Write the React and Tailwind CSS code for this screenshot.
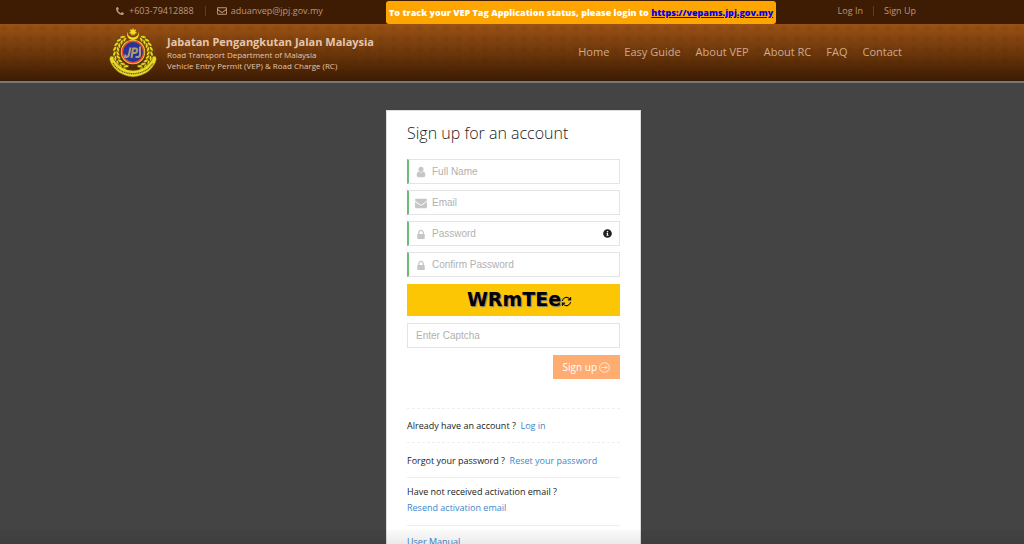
import React from "react";
import { FaInfoCircle, FaRegEnvelope } from "react-icons/fa";

const USER =
  "M1536 1399q0 109-62.5 187t-150.5 78h-854q-88 0-150.5-78t-62.5-187q0-85 8.5-160.5t31.5-152 58.5-131 94-89 134.5-34.5q131 128 313 128t313-128q76 0 134.5 34.5t94 89 58.5 131 31.5 152 8.5 160.5zm-256-887q0 159-112.5 271.5t-271.5 112.5-271.5-112.5-112.5-271.5 112.5-271.5 271.5-112.5 271.5 112.5 112.5 271.5z";
const MAIL =
  "M1792 710v794q0 66-47 113t-113 47h-1472q-66 0-113-47t-47-113v-794q44 49 101 87 362 246 497 345 57 42 92.5 65.5t94.5 48 110 24.5h2q51 0 110-24.5t94.5-48 92.5-65.5q170-123 498-345 57-39 100-87zm0-294q0 79-49 151t-122 123q-376 261-468 325-10 7-42.5 31t-54 38.5-52 32.5-57.5 27-50 9h-2q-23 0-50-9t-57.5-27-52-32.5-54-38.5-42.5-31q-91-64-262-182.5t-205-142.5q-62-42-117-115.5t-55-136.5q0-78 41.5-130t118.5-52h1472q65 0 112.5 47t47.5 113z";
const LOCK =
  "M320 768h512v-192q0-106-75-181t-181-75-181 75-75 181v192zm832 96v576q0 40-28 68t-68 28h-960q-40 0-68-28t-28-68v-576q0-40 28-68t68-28h32v-192q0-184 132-316t316-132 316 132 132 316v192h32q40 0 68 28t28 68z";
const PHONE =
  "M1408 1112q0 27-10 70.5t-21 68.5q-21 50-122 106-94 51-186 51-27 0-53-3.5t-57.5-12.5-47-14.5-55.5-20.5-49-18q-98-35-175-83-127-79-264-216t-216-264q-48-77-83-175-3-9-18-49t-20.5-55.5-14.5-47-12.5-57.5-3.5-53q0-92 51-186 56-101 106-122 25-11 68.5-21t70.5-10q14 0 21 3 18 6 53 76 11 19 30 54t35 63.5 31 53.5q3 4 17.5 25t21.5 35.5 7 28.5q0 20-28.5 50t-62 55-62 53-28.5 46q0 9 5 22.5t8.5 20.5 14 24 11.5 19q76 137 174 235t235 174q2 1 19 11.5t24 14 20.5 8.5 22.5 5q18 0 46-28.5t53-62 55-62 50-28.5q14 0 28.5 7t35.5 21.5 25 17.5q25 15 53.5 31t63.5 35 54 30q70 35 76 53 3 7 3 21z";

function Glyph({ d, viewBox, className }) {
  return (
    <svg viewBox={viewBox} className={className} fill="currentColor" aria-hidden="true">
      <path d={d} />
    </svg>
  );
}

function Crest() {
  const leaves = [];
  for (let i = 0; i < 9; i++) {
    const deg = 54 - i * 15;
    const a = (deg * Math.PI) / 180;
    for (const side of [1, -1]) {
      leaves.push(
        <g
          key={i + "_" + side}
          transform={`translate(${25 + side * 17 * Math.cos(a)} ${25.5 - 17 * Math.sin(a)}) scale(${side} 1) rotate(${-deg - 90})`}
        >
          <ellipse cx="0" cy="-1.8" rx="2.8" ry="1.4" transform="rotate(25)" />
          <ellipse cx="0" cy="1.8" rx="2.8" ry="1.4" transform="rotate(-25)" />
        </g>
      );
    }
  }
  return (
    <svg viewBox="0 0 50 52" className="h-[52px] w-[50px] shrink-0" role="img" aria-label="JPJ crest">
      <g fill="#e6d51f" stroke="#4f3a08" strokeWidth="0.5">{leaves}</g>
      <path d="M19.500 4.500a6 6 0 1 0 11 0 5.600 5 0 1 1-11 0z" fill="#f0e224" />
      <path d="M25 1.500l.9 1.700 2.100-.5-1 1.900 1.500 1.400-2.100.4-.2 1.800-1.200-1.400-1.200 1.400-.2-1.800-2.100-.4 1.500-1.400-1-1.900 2.100.5z" fill="#f0e224" stroke="#f0e224" strokeWidth="0.500" />
      <path d="M1.500 32l1-3 3 .5q.5 1.500.5 3Q12 43 25 43.500 38 43 44 32.500q0-1.500.5-3l3-.5 1 3-1 3.500Q41 48.500 25 50 9 48.500 2.500 35.500z" fill="#e9dc22" stroke="#6b5010" strokeWidth="0.500" />
      <path d="M5 36Q11 46 25 46.800 39 46 45 36" fill="none" stroke="#6d5a30" strokeWidth="1.300" strokeDasharray="1.200 .6" />
      <circle cx="25" cy="25" r="12.200" fill="#e9dc3a" />
      <circle cx="25" cy="25" r="10.700" fill="#28349a" stroke="#ee4a2a" strokeWidth="1.500" />
      <g fill="none" stroke="#a99c72" strokeWidth="2">
        <path d="M22.500 20.500l-1.500 7q-.5 2.500-2.500 2.500h-1.500l.5-2.500" />
        <path d="M23.500 31l1.500-9.500h2.500q2 0 1.700 2.200t-2.400 2.200h-2" />
        <path d="M32 19.500v8q0 2.500-2.500 2.500h-2" />
      </g>
    </svg>
  );
}

function Field({ id, label, type = "text", icon, viewBox, iconClass, info }) {
  return (
    <div className="flex h-[25px] items-center border border-l-2 border-[#e4e4e4] border-l-[#67bd78] bg-white">
      <label htmlFor={id} aria-label={label} className="flex w-[23px] shrink-0 justify-center pl-px text-[#c6c6c6]">
        <Glyph d={icon} viewBox={viewBox} className={iconClass} />
      </label>
      <input
        id={id}
        type={type}
        placeholder={label}
        className="h-[22px] min-w-0 flex-1 bg-transparent font-['Liberation_Sans',sans-serif] text-[10px] leading-5 text-[#333] outline-none placeholder:text-[#b1b1b1]"
      />
      {info && (
        <button type="button" aria-label="Password requirements" className="mr-[7px] text-[#222]">
          <FaInfoCircle className="size-[9px]" />
        </button>
      )}
    </div>
  );
}

const nav = ["Home", "Easy Guide", "About VEP", "About RC", "FAQ", "Contact"];

export default function App() {
  return (
    <div className="h-screen overflow-hidden bg-[#444] font-['Open_Sans',sans-serif] text-[9px] text-[#222]">
      <div className="bg-[#3e1c04] text-[#bd9675]">
        <div className="mx-auto flex h-6 max-w-[808px] items-center">
          <div className="flex w-[278px] shrink-0 items-center pb-[2px] pl-2">
            <Glyph d={PHONE} viewBox="0 0 1408 1408" className="mr-[5px] size-[8px]" />
            <span>+603-79412888</span>
            <span className="mx-[11px] h-[10px] w-px bg-[#6b3a14]" />
            <FaRegEnvelope className="mr-1 size-[10px]" />
            <a href="#mail">aduanvep@jpj.gov.my</a>
          </div>
          <p className="mt-px h-[23px] shrink-0 rounded-[3px] bg-[#ffa500] px-[3px] leading-[23px] font-extrabold whitespace-nowrap text-white">
            To track your VEP Tag Application status, please login to{" "}
            <a href="#vepams" className="text-[#0000ee] underline">https://vepams.jpj.gov.my</a>
          </p>
          <div className="ml-auto flex items-center pb-[3px]">
            <a href="#login">Log In</a>
            <span className="mx-[10px] h-[10px] w-px bg-[#6b3a14]" />
            <a href="#signup">Sign Up</a>
          </div>
        </div>
      </div>

      <header className="border-b-2 border-[#777] bg-[radial-gradient(circle_at_4px_4px,rgba(50,20,0,0.07)_2px,transparent_4px),linear-gradient(to_bottom,#9b5214,#6d370b_50%,#3c1b02)] bg-[length:13px_11px,100%_100%]">
        <div className="mx-auto flex h-[57px] max-w-[808px] items-center">
          <Crest />
          <div className="ml-[9px] leading-[11px] text-[#e3c6ae]">
            <p className="text-[11px] leading-[14px] font-bold">Jabatan Pengangkutan Jalan Malaysia</p>
            <p className="text-[8px]">Road Transport Department of Malaysia</p>
            <p className="text-[8px]">Vehicle Entry Permit (VEP) &amp; Road Charge (RC)</p>
          </div>
          <nav className="mr-[14px] ml-auto flex gap-[15px] text-[11px] text-[#d0aa8b]">
            {nav.map((item) => (
              <a key={item} href="#top">{item}</a>
            ))}
          </nav>
        </div>
      </header>

      <main className="pt-[27px] pl-[3px]">
        <section className="mx-auto max-w-[255px] border border-[#ddd] bg-white px-5 pb-8">
          <h1 className="pt-[10px] text-[16px] leading-6 font-light">Sign up for an account</h1>
          <form className="flex flex-col gap-[6px] pt-[14px]">
            <Field id="name" label="Full Name" icon={USER} viewBox="0 0 1792 1792" iconClass="size-[12px]" />
            <Field id="email" label="Email" type="email" icon={MAIL} viewBox="0 0 1792 1792" iconClass="size-[12px]" />
            <Field id="password" label="Password" type="password" icon={LOCK} viewBox="0 0 1152 1536" iconClass="h-[10px] w-[8px]" info />
            <Field id="confirm" label="Confirm Password" type="password" icon={LOCK} viewBox="0 0 1152 1536" iconClass="h-[10px] w-[8px]" />
            <div className="mt-px mb-px flex h-8 items-center justify-center bg-[#fdc605] pb-[2px] pl-3">
              <span className="font-['DejaVu_Sans',sans-serif] text-[19px] leading-6 font-bold text-black [text-shadow:1px_1px_1px_#777]">WRmTEe</span>
              <button type="button" aria-label="Refresh captcha" className="mt-1">
                <svg viewBox="0 0 20 20" className="size-[11px]" fill="none" stroke="#111" strokeWidth="2" aria-hidden="true">
                  <path d="M2.500 9a7.500 7.500 0 0 1 13-4l2 2M17.500 2v5h-5M17.500 11a7.500 7.500 0 0 1-13 4l-2-2M2.500 18v-5h5" />
                </svg>
              </button>
            </div>
            <input
              type="text"
              aria-label="Enter Captcha"
              placeholder="Enter Captcha"
              className="h-[25px] w-full border border-[#e4e4e4] px-2 font-['Liberation_Sans',sans-serif] text-[10px] leading-5 outline-none placeholder:text-[#b1b1b1]"
            />
            <button type="submit" className="mt-px flex h-6 items-center gap-[2px] self-end bg-[#ffac73] px-[10px] text-[10px] text-white">
              Sign up
              <svg viewBox="0 0 20 20" className="size-[11px]" fill="none" stroke="currentColor" strokeWidth="1.300" aria-hidden="true">
                <circle cx="10" cy="10" r="8.700" />
                <path d="M4.500 10h10M11 6.500l3.500 3.500-3.500 3.500" />
              </svg>
            </button>
          </form>
          <div className="mt-[29px] leading-4">
            <p className="border-t border-dashed border-[#eee] pt-[9px] pb-2">
              Already have an account ?&nbsp; <a href="#login" className="text-[#3b87cb]">Log in</a>
            </p>
            <p className="border-t border-dashed border-[#eee] pt-[10px] pb-2">
              Forgot your password ?&nbsp; <a href="#reset" className="text-[#3b87cb]">Reset your password</a>
            </p>
            <p className="border-t border-[#eee] pt-[6px] pb-[9px]">
              Have not received activation email ?
              <br />
              <a href="#resend" className="text-[#3b87cb]">Resend activation email</a>
            </p>
            <p className="border-t border-[#eee] pt-2">
              <a href="#manual" className="text-[#3b87cb]">User Manual</a>
            </p>
          </div>
        </section>
      </main>
      <div className="pointer-events-none fixed inset-x-0 bottom-0 h-[14px] bg-linear-to-b from-black/2 to-black/8" />
    </div>
  );
}
